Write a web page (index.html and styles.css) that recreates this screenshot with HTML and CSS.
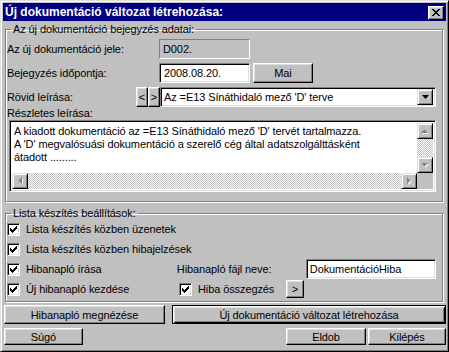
FILE: index.html
```html
<!DOCTYPE html>
<html lang="hu">
<head>
  <meta charset="UTF-8" />
  <title>Új dokumentáció változat létrehozása</title>
  <link rel="stylesheet" href="styles.css">
</head>
<body>
  <div class="window">
    <div class="titlebar">
      <span class="title">Új dokumentáció változat létrehozása:</span>
      <button class="close-btn">
        <svg width="8" height="7" viewBox="0 0 8 7"><path d="M0 0h2v1h1v1h2V1h1V0h2v1H7v1H6v1H5v1h1v1h1v1h1v1H6V6H5V5H3v1H2v1H0V6h1V5h1V4h1V3H2V2H1V1H0z" fill="#000"/></svg>
      </button>
    </div>

    <div class="dialog">
      <fieldset class="group group-entry">
        <legend>Az új dokumentáció bejegyzés adatai:</legend>
        <div class="form-row">
          <span class="label">Az új dokumentáció jele:</span>
          <div class="field readonly">D002.</div>
        </div>
        <div class="form-row">
          <span class="label">Bejegyzés időpontja:</span>
          <div class="field date-field">2008.08.20.</div>
          <button class="btn btn-mai">Mai</button>
        </div>
        <div class="form-row">
          <span class="label label-short">Rövid leírása:</span>
          <button class="btn btn-nav">&lt;</button>
          <button class="btn btn-nav">&gt;</button>
          <div class="field combo">
            <span class="combo-text">Az =E13 Sínáthidaló mező 'D' terve</span>
            <span class="combo-btn">
              <svg width="7" height="4" viewBox="0 0 7 4"><path d="M0 0h7L3.5 4z" fill="#000"/></svg>
            </span>
          </div>
        </div>
        <div class="caption">Részletes leírása:</div>
        <div class="memo">
          <div class="memo-text">A kiadott dokumentáció az =E13 Sínáthidaló mező 'D' tervét tartalmazza.<br>A 'D' megvalósuási dokumentáció a szerelő cég által adatszolgálttásként<br>átadott .........</div>
          <div class="vscroll">
            <span class="scroll-btn">
              <svg width="8" height="5" viewBox="0 0 8 5"><path d="M1 5h7L4.5 1.5z" fill="#fff"/><path d="M0 4h7L3.5 0.5z" fill="#808080"/></svg>
            </span>
            <span class="track"></span>
            <span class="scroll-btn">
              <svg width="8" height="5" viewBox="0 0 8 5"><path d="M1 1h7L4.5 4.5z" fill="#fff"/><path d="M0 0h7L3.5 3.5z" fill="#808080"/></svg>
            </span>
          </div>
          <div class="hscroll">
            <span class="scroll-btn">
              <svg width="5" height="8" viewBox="0 0 5 8"><path d="M5 1v7L1.5 4.5z" fill="#fff"/><path d="M4 0v7L0.5 3.5z" fill="#808080"/></svg>
            </span>
            <span class="track"></span>
            <span class="scroll-btn">
              <svg width="5" height="8" viewBox="0 0 5 8"><path d="M1 1v7L4.5 4.5z" fill="#fff"/><path d="M0 0v7L3.5 3.5z" fill="#808080"/></svg>
            </span>
          </div>
          <div class="corner"></div>
        </div>
      </fieldset>

      <fieldset class="group group-list">
        <legend>Lista készítés beállítások:</legend>
        <div class="check-row">
          <span class="check-item"><span class="check"><svg width="7" height="7" viewBox="0 0 7 7"><path d="M0 2h1v3H0zM1 3h1v3H1zM2 4h1v3H2zM3 3h1v3H3zM4 2h1v3H4zM5 1h1v3H5zM6 0h1v3H6z"/></svg></span>Lista készítés közben üzenetek</span>
        </div>
        <div class="check-row">
          <span class="check-item"><span class="check"><svg width="7" height="7" viewBox="0 0 7 7"><path d="M0 2h1v3H0zM1 3h1v3H1zM2 4h1v3H2zM3 3h1v3H3zM4 2h1v3H4zM5 1h1v3H5zM6 0h1v3H6z"/></svg></span>Lista készítés közben hibajelzések</span>
        </div>
        <div class="check-row">
          <span class="check-item col-left"><span class="check"><svg width="7" height="7" viewBox="0 0 7 7"><path d="M0 2h1v3H0zM1 3h1v3H1zM2 4h1v3H2zM3 3h1v3H3zM4 2h1v3H4zM5 1h1v3H5zM6 0h1v3H6z"/></svg></span>Hibanapló írása</span>
          <span class="label label-file">Hibanapló fájl neve:</span>
          <div class="field file-field">DokumentációHiba</div>
        </div>
        <div class="check-row">
          <span class="check-item col-left"><span class="check"><svg width="7" height="7" viewBox="0 0 7 7"><path d="M0 2h1v3H0zM1 3h1v3H1zM2 4h1v3H2zM3 3h1v3H3zM4 2h1v3H4zM5 1h1v3H5zM6 0h1v3H6z"/></svg></span>Új hibanapló kezdése</span>
          <span class="check-item col-summary"><span class="check"><svg width="7" height="7" viewBox="0 0 7 7"><path d="M0 2h1v3H0zM1 3h1v3H1zM2 4h1v3H2zM3 3h1v3H3zM4 2h1v3H4zM5 1h1v3H5zM6 0h1v3H6z"/></svg></span>Hiba összegzés</span>
          <button class="btn btn-small">&gt;</button>
        </div>
      </fieldset>

      <div class="button-row">
        <button class="btn btn-log">Hibanapló megnézése</button>
        <button class="btn btn-default">Új dokumentáció változat létrehozása</button>
      </div>
      <div class="button-row footer">
        <button class="btn btn-footer">Súgó</button>
        <span class="spacer"></span>
        <button class="btn btn-footer btn-eldob">Eldob</button>
        <button class="btn btn-footer btn-exit">Kilépés</button>
      </div>
    </div>
  </div>
</body>
</html>
```

FILE: styles.css
```css
* {
  box-sizing: border-box;
}
html, body {
  margin: 0;
  padding: 0;
}
body {
  width: 449px;
  height: 352px;
  overflow: hidden;
  background-color: #c0c0c0;
  font-family: "Liberation Sans", Arial, sans-serif;
  font-size: 11px;
  line-height: 13px;
  letter-spacing: -0.1px;
  color: #000;
}
.window {
  width: 449px;
  height: 352px;
  background-color: #c0c0c0;
  border: 1px solid;
  border-color: #dfdfdf #000 #000 #dfdfdf;
  box-shadow: inset 1px 1px #fff, inset -1px -1px #808080;
  padding: 2px;
}
.titlebar {
  height: 18px;
  background-color: #000080;
  display: flex;
  align-items: center;
  justify-content: space-between;
  padding: 0 2px 0 2px;
}
.title {
  color: #fff;
  font-weight: bold;
  font-size: 12px;
  letter-spacing: 0;
}
.close-btn {
  width: 16px;
  height: 14px;
  padding: 0;
  margin-top: 1px;
  background-color: #c0c0c0;
  border: 1px solid;
  border-color: #fff #000 #000 #fff;
  box-shadow: inset -1px -1px #808080, inset 1px 1px #dfdfdf;
  display: flex;
  align-items: center;
  justify-content: center;
}

/* dialog content */
.dialog {
  padding: 0 0 0 1px;
}
.group {
  margin: 2px 3px 0 1px;
  padding: 0 6px 9px 1px;
  border: 1px solid #808080;
  box-shadow: inset 1px 1px #fff, 1px 1px #fff;
  min-width: 0;
}
.group legend {
  padding: 0 2px;
  margin-left: 4px;
  line-height: 13px;
}
.group-list {
  margin-top: 5px;
  padding-bottom: 2px;
}
.group-list legend {
  line-height: 12px;
}
.form-row {
  display: flex;
  align-items: center;
  height: 20px;
  margin-top: 4px;
}
.form-row:first-of-type {
  margin-top: 3px;
}
.label {
  width: 152px;
  flex-shrink: 0;
}
.label-short {
  width: 129px;
}
.caption {
  height: 13px;
}

/* sunken fields */
.field {
  height: 20px;
  border: 1px solid;
  border-color: #808080 #fff #fff #808080;
  box-shadow: inset 1px 1px #000, inset -1px -1px #dfdfdf;
  background-color: #fff;
  padding: 0 3px;
  display: flex;
  align-items: center;
  white-space: nowrap;
  overflow: hidden;
}
.readonly {
  width: 91px;
  background-color: #c0c0c0;
  box-shadow: none;
}
.date-field {
  width: 91px;
  padding-left: 4px;
}
.combo {
  width: 276px;
  padding: 2px 2px 2px 3px;
  justify-content: space-between;
}
.combo-btn {
  width: 16px;
  height: 16px;
  flex-shrink: 0;
  background-color: #c0c0c0;
  border: 1px solid;
  border-color: #dfdfdf #000 #000 #dfdfdf;
  box-shadow: inset 1px 1px #fff, inset -1px -1px #808080;
  display: flex;
  align-items: center;
  justify-content: center;
}
.file-field {
  width: 131px;
}

/* memo */
.memo {
  margin-left: 2px;
  width: 427px;
  height: 72px;
  border: 1px solid;
  border-color: #808080 #fff #fff #808080;
  box-shadow: inset 1px 1px #000, inset -1px -1px #dfdfdf;
  background-color: #fff;
  padding: 2px;
  display: grid;
  grid-template-columns: 1fr 16px;
  grid-template-rows: 1fr 16px;
}
.memo-text {
  padding: 2px 2px;
  white-space: nowrap;
  overflow: hidden;
}
.vscroll {
  display: flex;
  flex-direction: column;
}
.hscroll {
  display: flex;
}
.track {
  flex: 1;
  background-color: #fff;
  background-image: repeating-conic-gradient(#c0c0c0 0 25%, #fff 0 50%);
  background-size: 2px 2px;
}
.scroll-btn {
  width: 16px;
  height: 16px;
  flex-shrink: 0;
  background-color: #c0c0c0;
  border: 1px solid;
  border-color: #dfdfdf #000 #000 #dfdfdf;
  box-shadow: inset 1px 1px #fff, inset -1px -1px #808080;
  display: flex;
  align-items: center;
  justify-content: center;
}
.corner {
  background-color: #c0c0c0;
}

/* checkboxes */
.check-row {
  display: flex;
  align-items: center;
  height: 20px;
}
.check-item {
  display: flex;
  align-items: center;
  gap: 6px;
}
.col-left {
  width: 171px;
}
.col-summary {
  width: 107px;
  margin-left: 1px;
}
.check {
  width: 13px;
  height: 13px;
  flex-shrink: 0;
  border: 1px solid;
  border-color: #808080 #fff #fff #808080;
  box-shadow: inset 1px 1px #000, inset -1px -1px #dfdfdf;
  background-color: #fff;
  display: flex;
  align-items: center;
  justify-content: center;
}
.label-file {
  width: 129px;
}

/* buttons */
.btn {
  font-family: inherit;
  font-size: 11px;
  letter-spacing: -0.1px;
  color: #000;
  padding: 0;
  background-color: #c0c0c0;
  border: 1px solid;
  border-color: #fff #000 #000 #fff;
  box-shadow: inset -1px -1px #808080, inset 1px 1px #dfdfdf;
  flex-shrink: 0;
}
.btn-mai {
  width: 60px;
  height: 20px;
  margin-left: 3px;
}
.btn-nav {
  width: 12px;
  height: 20px;
}
.btn-small {
  width: 18px;
  height: 18px;
}
.button-row {
  display: flex;
  margin-top: 3px;
}
.button-row.footer {
  margin-top: 4px;
}
.btn-log {
  width: 161px;
  height: 19px;
  margin-right: 7px;
}
.btn-default {
  flex: 1;
  height: 19px;
  border-color: #000;
  box-shadow: inset 1px 1px #fff, inset -1px -1px #000, inset 2px 2px #dfdfdf, inset -2px -2px #808080;
}
.btn-footer {
  width: 79px;
  height: 17px;
}
.spacer {
  flex: 1;
}
.btn-eldob {
  width: 80px;
  margin-right: 2px;
}
.btn-exit {
  width: 78px;
}
```
